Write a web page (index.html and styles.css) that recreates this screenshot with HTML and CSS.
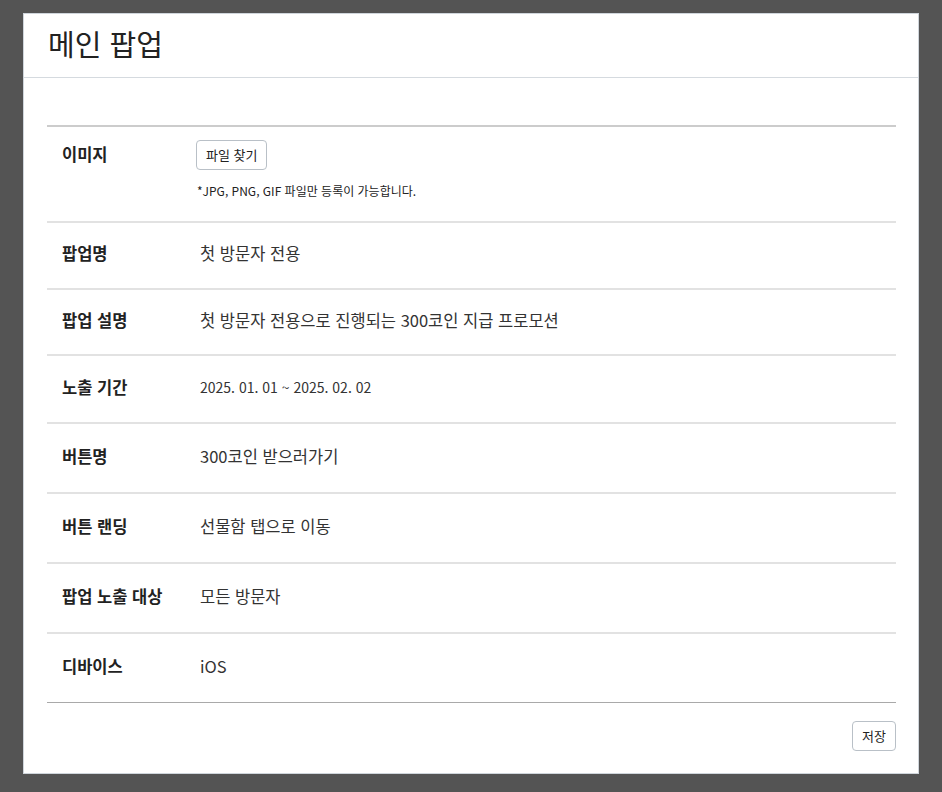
FILE: index.html
```html
<!DOCTYPE html>
<html lang="ko">
<head>
<meta charset="utf-8">
<link rel="stylesheet" href="styles.css">
</head>
<body>
<div class="panel">
  <div class="panel-header"><h1 class="title">메인 팝업</h1></div>
  <div class="panel-body">
    <table class="info">
      <tr class="row-image">
        <th>이미지</th>
        <td>
          <button class="btn">파일 찾기</button>
          <p class="hint">*JPG, PNG, GIF 파일만 등록이 가능합니다.</p>
        </td>
      </tr>
      <tr class="first"><th>팝업명</th><td>첫 방문자 전용</td></tr>
      <tr><th>팝업 설명</th><td>첫 방문자 전용으로 진행되는 300코인 지급 프로모션</td></tr>
      <tr class="mid"><th>노출 기간</th><td class="small">2025. 01. 01 ~ 2025. 02. 02</td></tr>
      <tr class="tall"><th>버튼명</th><td>300코인 받으러가기</td></tr>
      <tr class="tall"><th>버튼 랜딩</th><td>선물함 탭으로 이동</td></tr>
      <tr class="tall"><th>팝업 노출 대상</th><td>모든 방문자</td></tr>
      <tr class="tall last"><th>디바이스</th><td>iOS</td></tr>
    </table>
    <div class="actions"><button class="btn">저장</button></div>
  </div>
</div>
</body>
</html>
```
FILE: styles.css
```css
html, body { margin: 0; padding: 0; }
body {
  background: #545454;
  font-family: "Noto Sans CJK KR", "Noto Sans", sans-serif;
  color: #222;
  padding: 13px 23px 0 23px;
}
.panel {
  background: #fff;
  border: 1px solid #cfd5db;
  width: 896px;
  box-sizing: border-box;
  height: 761px;
}
.panel-header {
  height: 63px;
  border-bottom: 1px solid #d5dadf;
  padding: 0 24px;
  display: flex;
  align-items: center;
}
.title {
  margin: 0;
  font-size: 29px;
  font-weight: 400;
  color: #222;
  line-height: 1;
  position: relative;
  top: -2px;
}
.panel-body { padding: 47px 22px 0 23px; }
.info {
  width: 100%;
  border-collapse: collapse;
  border-top: 2px solid #cccccc;
}
.info tr { border-bottom: 2px solid #e2e2e2; }
.info tr.last { border-bottom: 1px solid #a9a9a9; }
.info th {
  width: 138px;
  text-align: left;
  font-size: 16.5px;
  font-weight: 700;
  padding: 18px 0 22px 15px;
  line-height: 24px;
  vertical-align: middle;
  color: #222;
}
.info td {
  font-size: 16.5px;
  line-height: 24px;
  padding: 18px 0 22px 0;
  color: #333;
  vertical-align: middle;
}
.info td.small { font-size: 14px; }
.info tr.first th, .info tr.first td { padding-bottom: 23px; }
.info tr.mid th, .info tr.mid td { padding-top: 19px; padding-bottom: 23px; }
.info tr.tall th, .info tr.tall td { padding-top: 20px; padding-bottom: 24px; }
.row-image th { vertical-align: top; padding-top: 15px; }
.row-image td { padding: 13px 0 20px 0; vertical-align: top; }
.btn {
  font-family: inherit;
  font-size: 13px;
  color: #222;
  background: #fff;
  border: 1px solid #b9c0c7;
  border-radius: 4px;
  height: 30px;
  padding: 0 9px;
  line-height: 28px;
  margin-left: -4px;
  cursor: pointer;
}
.hint {
  margin: 11px 0 0 -3px;
  font-size: 12px;
  line-height: 20px;
  color: #222;
}
.actions {
  display: flex;
  justify-content: flex-end;
  padding-top: 18px;
}
.actions .btn { margin: 0; }
```
